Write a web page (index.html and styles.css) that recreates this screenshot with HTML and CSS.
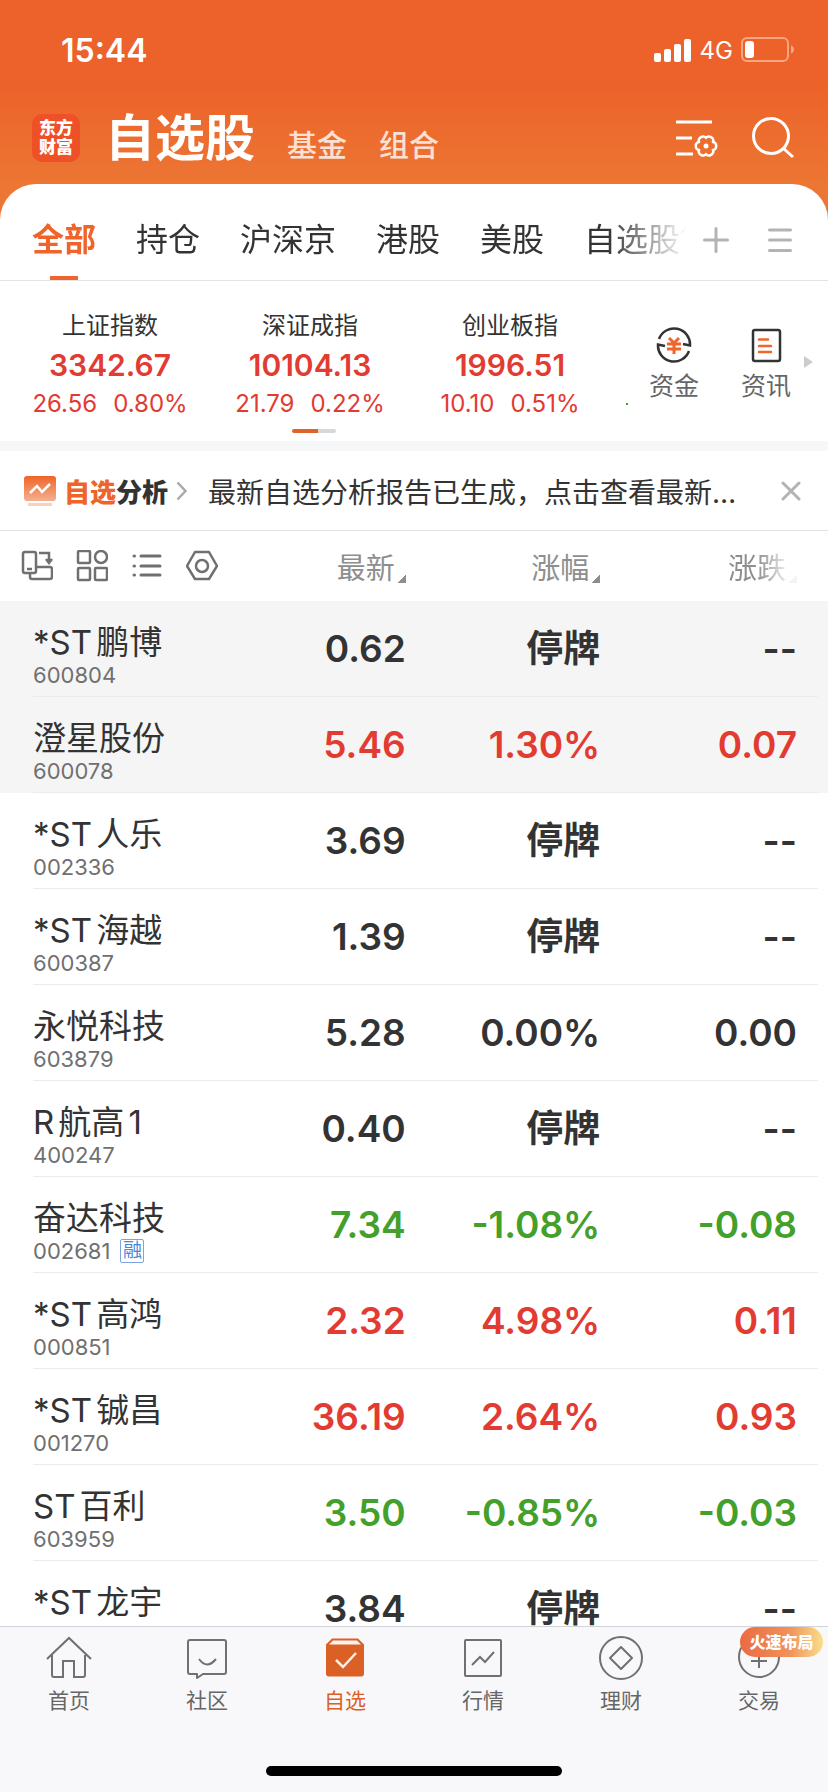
FILE: index.html
```html
<!DOCTYPE html>
<html lang="zh-CN">
<head>
    <meta charset="UTF-8">
    <meta name="viewport" content="width=device-width, initial-scale=1.0">
    <title>自选股</title>
    <link rel="stylesheet" href="styles.css">
</head>
<body>
    <header class="header">
        <div class="status">
            <span class="time">15:44</span>
            <div class="status-right">
                <svg width="38" height="24" viewBox="0 0 38 24" fill="#fff">
                    <rect x="0" y="15" width="7" height="9" rx="2"/>
                    <rect x="10" y="11" width="7" height="13" rx="2"/>
                    <rect x="20" y="6" width="7" height="18" rx="2"/>
                    <rect x="30" y="1" width="7" height="23" rx="2"/>
                </svg>
                <span class="network">4G</span>
                <svg width="54" height="26" viewBox="0 0 54 26">
                    <rect x="1" y="1" width="46" height="23" rx="5" fill="none" stroke="#f5a582" stroke-width="2"/>
                    <rect x="4" y="4" width="9" height="17" rx="3" fill="#fff"/>
                    <path d="M50 8.500c4 1 4 7 0 8z" fill="#f5a582"/>
                </svg>
            </div>
        </div>
        <div class="title-bar">
            <div class="logo"><span>东方</span><span>财富</span></div>
            <nav class="sections">
                <h1>自选股</h1>
                <a href="#">基金</a>
                <a href="#">组合</a>
            </nav>
            <div class="title-icons">
                <button type="button" aria-label="设置">
                    <svg width="44" height="44" viewBox="0 0 44 44" fill="none" stroke="#fff" stroke-width="3">
                        <path d="M0 6h36M0 22h16M0 38h17"/>
                        <g transform="translate(30 30)">
                            <path stroke-width="2.500" stroke-linejoin="round" d="M6.900 4C11.300 4.100 11.300-4.100 6.900-4C9.200-7.700 2.100-11.800 0-8C-2.100-11.800-9.200-7.700-6.900-4C-11.300-4.100-11.300 4.100-6.900 4C-9.200 7.700-2.100 11.800 0 8C2.100 11.800 9.200 7.700 6.900 4z"/>
                            <circle r="2.500" fill="#fff" stroke="none"/>
                        </g>
                    </svg>
                </button>
                <button type="button" aria-label="搜索">
                    <svg width="44" height="44" viewBox="0 0 44 44" fill="none" stroke="#fff" stroke-width="3">
                        <circle cx="19" cy="20" r="17.500"/>
                        <path d="M31 32l10 9"/>
                    </svg>
                </button>
            </div>
        </div>
    </header>

    <main class="panel">
        <div class="tabs">
            <nav class="tab-list">
                <a href="#" class="active">全部</a>
                <a href="#">持仓</a>
                <a href="#">沪深京</a>
                <a href="#">港股</a>
                <a href="#">美股</a>
                <a href="#">自选股1</a>
            </nav>
            <button type="button" aria-label="添加">
                <svg width="26" height="26" viewBox="0 0 26 26" stroke="#b3b3b3" stroke-width="3" stroke-linecap="round"><path d="M13 1.500v23M1.500 13h23"/></svg>
            </button>
            <button type="button" aria-label="管理">
                <svg width="26" height="26" viewBox="0 0 26 26" stroke="#b3b3b3" stroke-width="3" stroke-linecap="round"><path d="M2.500 3h21M2.500 13h21M2.500 23.500h21"/></svg>
            </button>
        </div>

        <section class="market">
            <div class="indexes">
                <div class="index">
                    <span class="index-name">上证指数</span>
                    <strong>3342.67</strong>
                    <span class="index-change"><span>26.56</span><span>0.80%</span></span>
                </div>
                <div class="index">
                    <span class="index-name">深证成指</span>
                    <strong>10104.13</strong>
                    <span class="index-change"><span>21.79</span><span>0.22%</span></span>
                </div>
                <div class="index">
                    <span class="index-name">创业板指</span>
                    <strong>1996.51</strong>
                    <span class="index-change"><span>10.10</span><span>0.51%</span></span>
                </div>
            </div>
            <i class="next-index"></i>
            <div class="shortcuts">
                <a href="#">
                    <svg width="36" height="36" viewBox="0 0 36 36" fill="none" stroke="#333" stroke-width="2.500">
                        <path d="M3 12A16 16 0 0 1 34 18.500L27 17"/>
                        <path d="M33 24A16 16 0 0 1 2 17.500L9 19"/>
                        <path d="M13 11l5 5l5-5M11 17h14M11 22h14M18 16v11" stroke="#f0652a" stroke-width="3"/>
                    </svg>
                    资金
                </a>
                <a href="#">
                    <svg width="36" height="36" viewBox="0 0 36 36" fill="none" stroke="#333" stroke-width="2.500">
                        <rect x="5" y="3" width="27" height="31" rx="2"/>
                        <path d="M11 12.500h9M11 19h12M11 25h12" stroke="#f0652a" stroke-linecap="round"/>
                    </svg>
                    资讯
                </a>
            </div>
            <svg class="more" width="9" height="12" viewBox="0 0 9 12"><path d="M0 0l9 6l-9 6z" fill="#ccc"/></svg>
            <div class="pager"></div>
        </section>

        <section class="notice">
            <svg width="32" height="32" viewBox="0 0 32 32">
                <defs>
                    <linearGradient id="chart-bg" x1="0" y1="0" x2="0" y2="1">
                        <stop offset="0" stop-color="#ee642a"/>
                        <stop offset="1" stop-color="#f5b090"/>
                    </linearGradient>
                </defs>
                <rect y="1" width="32" height="25" rx="3" fill="url(#chart-bg)"/>
                <rect x="4" y="28" width="24" height="3" rx="1" fill="#fad0b8"/>
                <path d="M6 18l7-7l5 6l8-8" fill="none" stroke="#fff" stroke-width="2.500"/>
            </svg>
            <b><em>自选</em>分析</b>
            <svg width="12" height="20" viewBox="0 0 12 20" fill="none" stroke="#aaa" stroke-width="2.500"><path d="M1.500 1.500l8 8.500l-8 8.500"/></svg>
            <p>最新自选分析报告已生成，点击查看最新自选股表现</p>
            <button type="button" aria-label="关闭">
                <svg width="20" height="20" viewBox="0 0 20 20" stroke="#b3b3b3" stroke-width="3" stroke-linecap="round"><path d="M2 2l16 16M18 2L2 18"/></svg>
            </button>
        </section>

        <table class="stocks">
            <thead>
                <tr>
                    <th class="tools">
                        <div>
                            <button type="button" aria-label="横屏">
                                <svg width="32" height="32" viewBox="0 0 32 32">
                                    <rect x="2" y="2" width="13" height="21" rx="2"/>
                                    <path d="M6 19h5M18 3h10v9M25 9l3 4l3-4M9 24v3q0 2 2 2h18q2 0 2-2v-8q0-2-2-2h-13"/>
                                </svg>
                            </button>
                            <button type="button" aria-label="宫格">
                                <svg width="32" height="32" viewBox="0 0 32 32">
                                    <rect x="2" y="1" width="12" height="12" rx="1"/><circle cx="25" cy="7" r="6"/>
                                    <rect x="2" y="18" width="12" height="12" rx="1"/><rect x="19" y="18" width="12" height="12" rx="1"/>
                                </svg>
                            </button>
                            <button type="button" aria-label="列表">
                                <svg width="32" height="32" viewBox="0 0 32 32">
                                    <path stroke-width="3" stroke-linecap="round" d="M10 6h19M10 16h19M10 25h19M3 6h.5M3 16h.5M3 25h.5"/>
                                </svg>
                            </button>
                            <button type="button" aria-label="表头设置">
                                <svg width="32" height="32" viewBox="0 0 32 32">
                                    <path stroke-linejoin="round" d="M9 2h14l8 14l-8 13h-14l-8-13z"/><circle cx="16" cy="16" r="6"/>
                                </svg>
                            </button>
                        </div>
                    </th>
                    <th><button type="button" class="sort">最新</button></th>
                    <th><button type="button" class="sort">涨幅</button></th>
                    <th><button type="button" class="sort faded">涨跌</button></th>
                </tr>
            </thead>
            <tbody>
                <tr class="pinned"><td><span class="name">*ST鹏博</span><span class="code">600804</span></td><td>0.62</td><td>停牌</td><td>--</td></tr>
                <tr class="pinned up"><td><span class="name">澄星股份</span><span class="code">600078</span></td><td>5.46</td><td>1.30%</td><td>0.07</td></tr>
                <tr><td><span class="name">*ST人乐</span><span class="code">002336</span></td><td>3.69</td><td>停牌</td><td>--</td></tr>
                <tr><td><span class="name">*ST海越</span><span class="code">600387</span></td><td>1.39</td><td>停牌</td><td>--</td></tr>
                <tr><td><span class="name">永悦科技</span><span class="code">603879</span></td><td>5.28</td><td>0.00%</td><td>0.00</td></tr>
                <tr><td><span class="name">R航高1</span><span class="code">400247</span></td><td>0.40</td><td>停牌</td><td>--</td></tr>
                <tr class="down"><td><span class="name">奋达科技</span><span class="code">002681<i>融</i></span></td><td>7.34</td><td>-1.08%</td><td>-0.08</td></tr>
                <tr class="up"><td><span class="name">*ST高鸿</span><span class="code">000851</span></td><td>2.32</td><td>4.98%</td><td>0.11</td></tr>
                <tr class="up"><td><span class="name">*ST铖昌</span><span class="code">001270</span></td><td>36.19</td><td>2.64%</td><td>0.93</td></tr>
                <tr class="down"><td><span class="name">ST百利</span><span class="code">603959</span></td><td>3.50</td><td>-0.85%</td><td>-0.03</td></tr>
                <tr><td><span class="name">*ST龙宇</span><span class="code"></span></td><td>3.84</td><td>停牌</td><td>--</td></tr>
            </tbody>
        </table>
    </main>

    <footer class="footer">
        <nav class="bottom-nav">
            <a href="#">
                <svg width="48" height="48" viewBox="0 0 48 48"><path d="M2 24L24 3l22 21M7 20v20q0 2 2 2h9v-16h11v16h9q2 0 2-2v-20"/></svg>
                首页
            </a>
            <a href="#">
                <svg width="48" height="48" viewBox="0 0 48 48"><path stroke-linejoin="round" d="M7 5h34q2 0 2 2v30q0 2-2 2h-21l-6 4v-4h-7q-2 0-2-2v-30q0-2 2-2z"/><path d="M16 24q8 11 17 0"/></svg>
                社区
            </a>
            <a href="#" class="active">
                <svg width="48" height="48" viewBox="0 0 48 48">
                    <path d="M11 3.500h26l6 6v29q0 3-3 3h-32q-3 0-3-3v-29z" fill="#db6026" stroke="none"/>
                    <path d="M12 5.500h24l4 4h-32z" fill="#fbf1ec" stroke="none"/>
                    <path d="M15 25l7 7l13-14" stroke="#fbf1ec" stroke-width="2.500"/>
                </svg>
                自选
            </a>
            <a href="#">
                <svg width="48" height="48" viewBox="0 0 48 48"><rect x="6" y="5" width="36" height="36" rx="1"/><path d="M13 30l8-8l5 5l9-10"/></svg>
                行情
            </a>
            <a href="#">
                <svg width="48" height="48" viewBox="0 0 48 48"><circle cx="24" cy="23" r="21"/><path stroke-linejoin="round" d="M24 12l11 11l-11 11l-11-11z"/></svg>
                理财
            </a>
            <a href="#">
                <svg width="48" height="48" viewBox="0 0 48 48"><circle cx="24" cy="22" r="20"/><path d="M16 26h16M24 17v16"/></svg>
                交易
                <span class="badge">火速布局</span>
            </a>
        </nav>
        <div class="home-bar"></div>
    </footer>
</body>
</html>
```
FILE: styles.css
```css
* {
    box-sizing: border-box;
}
body {
    margin: 0;
    height: 100vh;
    display: flex;
    flex-direction: column;
    overflow: hidden;
    font-family: Inter, "Noto Sans CJK SC", sans-serif;
    color: #333;
    background: linear-gradient(#ec622a 80px, #ec7633 184px);
}
a {
    color: inherit;
    text-decoration: none;
}
button {
    padding: 0;
    border: none;
    background: none;
    font: inherit;
    color: inherit;
    cursor: pointer;
}
svg {
    display: block;
    flex-shrink: 0;
}

/* header */
.header {
    color: #fff;
}
.status {
    display: flex;
    justify-content: space-between;
    align-items: center;
    height: 100px;
    padding: 0 33px 0 61px;
}
.time {
    font-size: 32px;
    font-weight: 600;
}
.status-right {
    display: flex;
    align-items: center;
    gap: 8px;
}
.network {
    font-size: 24px;
    font-weight: 400;
}
.title-bar {
    display: flex;
    align-items: center;
    height: 84px;
    padding: 0 32px 8px;
}
.logo {
    display: flex;
    flex-direction: column;
    align-items: center;
    justify-content: center;
    width: 48px;
    height: 48px;
    border-radius: 10px;
    background: #ee5028;
    font-size: 17px;
    font-weight: 900;
    line-height: 19px;
}
.sections {
    flex: 1;
    display: flex;
    align-items: last baseline;
    gap: 32px;
    padding-left: 25px;
}
.sections h1 {
    margin: 0;
    font-size: 50px;
    font-weight: 700;
    line-height: 72px;
}
.sections a {
    padding-top: 2px;
    font-size: 30px;
    font-weight: 500;
    color: #fce0d2;
}
.title-icons {
    display: flex;
    gap: 32px;
}

/* white sheet */
.panel {
    flex: 1;
    min-height: 0;
    overflow: hidden;
    background: #fff;
    border-radius: 36px 36px 0 0;
}
.tabs {
    display: flex;
    align-items: center;
    gap: 38px;
    height: 97px;
    padding: 16px 35px 0 32px;
    border-bottom: 1px solid #e3e3e3;
}
.tab-list {
    flex: 1;
    min-width: 0;
    display: flex;
    gap: 40px;
    margin-right: -22px;
    overflow: hidden;
    white-space: nowrap;
    font-size: 32px;
    line-height: 80px;
    -webkit-mask-image: linear-gradient(to left, transparent, #000 80px);
    mask-image: linear-gradient(to left, transparent, #000 80px);
}
.tab-list a {
    height: 80px;
}
.tab-list .active {
    color: #ee642a;
    font-weight: 700;
    background: linear-gradient(#ee642a, #ee642a) no-repeat center bottom / 28px 4px;
}

/* indexes */
.market {
    position: relative;
    display: flex;
    align-items: center;
    height: 160px;
    padding: 8px 15px 0 10px;
}
.indexes {
    flex: 1;
    display: grid;
    grid-template-columns: repeat(3, 1fr);
}
.index {
    display: flex;
    flex-direction: column;
    align-items: center;
}
.index-name {
    font-size: 24px;
    line-height: 36px;
}
.index strong {
    font-size: 30px;
    font-weight: 600;
    line-height: 42px;
    color: #e23b32;
}
.index-change {
    display: flex;
    gap: 16px;
    font-size: 24px;
    line-height: 36px;
    color: #e23b32;
}
/* edge of the next card in the carousel */
.next-index {
    width: 2px;
    height: 2px;
    margin: 78px 0 0 16px;
    background: #43a02a;
}
.shortcuts {
    display: flex;
    font-size: 25px;
    line-height: 36px;
    color: #666;
}
.shortcuts a {
    display: flex;
    flex-direction: column;
    align-items: center;
    gap: 5px;
    width: 92px;
}
.more {
    margin: -6px 0 0 -8px;
}
.pager {
    position: absolute;
    left: 292px;
    bottom: 8px;
    width: 44px;
    height: 4px;
    border-radius: 2px;
    background: linear-gradient(to right, #e0622a 26px, #d6d7dd 26px);
}

/* notice */
.notice {
    display: flex;
    align-items: center;
    height: 90px;
    padding: 0 27px 0 24px;
    border-top: 10px solid #f6f7f9;
    border-bottom: 1px solid #e3e3e3;
}
.notice b {
    margin: 0 8px;
    font-size: 26px;
    font-weight: 900;
}
.notice em {
    font-style: normal;
    color: #ee642a;
}
.notice p {
    flex: 1;
    min-width: 0;
    margin: 0 38px 0 20px;
    overflow: hidden;
    text-overflow: ellipsis;
    white-space: nowrap;
    font-size: 28px;
}

/* stock table */
.stocks {
    width: 100%;
    table-layout: fixed;
    border-collapse: collapse;
}
.stocks th {
    width: 22%;
    height: 70px;
    padding: 0;
    font-size: 29px;
    font-weight: 400;
    text-align: right;
    color: #8e8e8e;
}
.stocks th:nth-child(1) {
    width: 27%;
}
.stocks th:nth-child(3) {
    width: 23.5%;
}
.stocks th:nth-child(4) {
    width: 27.5%;
    padding-right: 31px;
}
.tools div {
    display: flex;
    gap: 23px;
    padding-left: 21px;
}
.tools svg {
    fill: none;
    stroke: #707070;
    stroke-width: 2.5;
}
.sort::after {
    content: "";
    display: inline-block;
    width: 8px;
    height: 8px;
    margin-left: 3px;
    vertical-align: -4px;
    background: linear-gradient(135deg, transparent 50%, #8e8e8e 50%);
}
.sort.faded {
    -webkit-mask-image: linear-gradient(to left, rgba(0, 0, 0, .1) 8px, #000 40px);
    mask-image: linear-gradient(to left, rgba(0, 0, 0, .1) 8px, #000 40px);
}
.stocks tbody tr {
    background: linear-gradient(#ebebeb, #ebebeb) no-repeat 33px 100% / calc(100% - 43px) 1px;
}
.stocks tbody .pinned {
    background-color: #f5f5f5;
}
.stocks td {
    height: 96px;
    padding: 0;
    font-size: 37px;
    font-weight: 600;
    line-height: 48px;
    text-align: right;
    white-space: nowrap;
}
.stocks td:first-child {
    padding: 12px 0 0 33px;
    text-align: left;
    font-weight: 400;
}
.stocks td:last-child {
    padding-right: 31px;
}
.name {
    display: block;
    font-size: 33px;
    line-height: 40px;
    text-autospace: normal;
}
.code {
    display: flex;
    align-items: center;
    gap: 10px;
    height: 26px;
    font-size: 22px;
    line-height: 26px;
    color: #707070;
}
.code i {
    width: 24px;
    height: 24px;
    border: 1px solid #7aa5e0;
    border-radius: 2px;
    font-size: 19px;
    font-style: normal;
    line-height: 22px;
    text-align: center;
    color: #4a86d8;
}
.up td + td {
    color: #e23b32;
}
.down td + td {
    color: #43a02a;
}

/* bottom bar */
.footer {
    background: #f8f8fa;
    border-top: 1px solid #d2d3d8;
}
.bottom-nav {
    display: grid;
    grid-template-columns: repeat(6, 1fr);
    padding-top: 8px;
    font-size: 21px;
    color: #666;
}
.bottom-nav a {
    position: relative;
    display: flex;
    flex-direction: column;
    align-items: center;
    gap: 2px;
    line-height: 32px;
}
.bottom-nav svg {
    fill: none;
    stroke: #707070;
    stroke-width: 2;
}
.bottom-nav .active {
    color: #db6026;
}
.badge {
    position: absolute;
    top: -8px;
    right: 5px;
    width: 83px;
    border-radius: 15px;
    background: linear-gradient(to right, #ec6a43, #f0925a 60%, #fadf8c);
    font-size: 16px;
    font-weight: 900;
    line-height: 30px;
    text-align: center;
    color: #fff;
}
.home-bar {
    width: 296px;
    height: 10px;
    margin: 49px auto 16px;
    border-radius: 5px;
    background: #000;
}
```
